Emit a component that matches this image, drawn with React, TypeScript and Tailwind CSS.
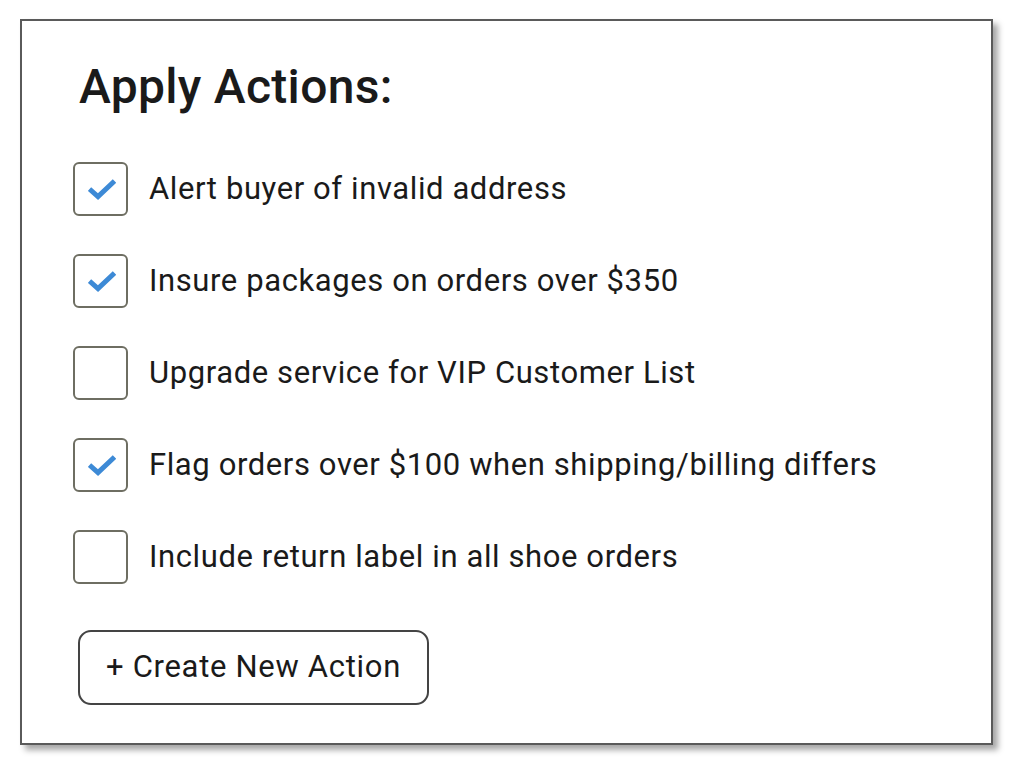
import React from "react";

const items = [
  { label: "Alert buyer of invalid address", checked: true },
  { label: "Insure packages on orders over $350", checked: true },
  { label: "Upgrade service for VIP Customer List", checked: false },
  { label: "Flag orders over $100 when shipping/billing differs", checked: true },
  { label: "Include return label in all shoe orders", checked: false },
];

function Check() {
  return (
    <svg width="28" height="22" viewBox="0 0 28 22" className="ml-[3px]">
      <path d="M1.5 11 L10 18.5 L26.5 3" fill="none" stroke="#3d8ad6" strokeWidth="5" strokeLinecap="butt" strokeLinejoin="miter" />
    </svg>
  );
}

export default function App() {
  return (
    <div className="w-[1014px] h-[766px] bg-white pt-[19px] pl-[20px]" style={{ fontFamily: "Roboto, 'Noto Sans', sans-serif" }}>
      <div className="w-[973px] h-[726px] border-2 border-[#5a5a5a] bg-white shadow-[5px_5px_6px_rgba(0,0,0,0.35)] pl-[51px] pt-[38px]">
        <h1 className="text-[48px] leading-[56px] font-medium tracking-[0.3px] text-[#1a1a1a] ml-[6px]">Apply Actions:</h1>
        <div className="mt-[47px] flex flex-col gap-[38px]">
          {items.map((it) => (
            <div key={it.label} className="flex items-center h-[54px]">
              <div className="w-[55px] h-[54px] border-[2.5px] border-[#6e6e62] rounded-[6px] flex items-center justify-center">
                {it.checked && <Check />}
              </div>
              <span className="ml-[21px] text-[31px] tracking-[0.6px] text-[#1a1a1a]">{it.label}</span>
            </div>
          ))}
        </div>
        <button className="mt-[46px] ml-[5px] w-[351px] h-[75px] border-2 border-[#444] rounded-[13px] text-[31px] tracking-[0.7px] text-[#1a1a1a] flex items-center justify-center">
          + Create New Action
        </button>
      </div>
    </div>
  );
}
